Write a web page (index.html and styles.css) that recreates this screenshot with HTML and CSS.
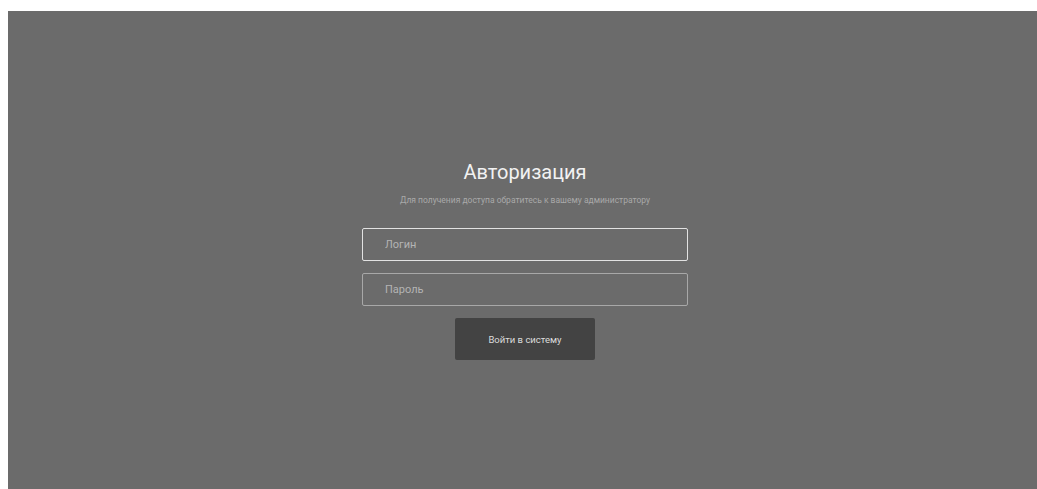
FILE: index.html
```html
<!DOCTYPE html>
<html lang="ru">
<head>
<meta charset="utf-8">
<title>Авторизация</title>
<link rel="stylesheet" href="styles.css">
</head>
<body>
<main class="screen">
  <form class="auth">
    <h1 class="auth-title">Авторизация</h1>
    <p class="auth-hint">Для получения доступа обратитесь к вашему администратору</p>
    <input class="auth-field auth-field--active" type="text" placeholder="Логин">
    <input class="auth-field" type="password" placeholder="Пароль">
    <button class="auth-submit" type="button">Войти в систему</button>
  </form>
</main>
</body>
</html>
```

FILE: styles.css
```css
html {
  overflow: hidden;
}

body {
  margin: 11px 0 0 8px;
  background: #ffffff;
  font-family: Roboto, "Liberation Sans", sans-serif;
}

.screen {
  width: 1034px;
  height: 478px;
  background: #6b6b6b;
  box-sizing: border-box;
  padding-top: 149px;
}

.auth {
  width: 326px;
  margin: 0 auto;
  display: flex;
  flex-direction: column;
  align-items: center;
}

.auth-title {
  margin: 0;
  font-size: 20px;
  line-height: 24px;
  font-weight: 400;
  color: #f2f2f2;
}

.auth-hint {
  margin: 10px 0 0;
  font-size: 8.5px;
  line-height: 12px;
  color: #a9a9a9;
  white-space: nowrap;
}

.auth-field {
  width: 100%;
  height: 33px;
  box-sizing: border-box;
  margin-top: 22px;
  padding: 0 22px;
  background: transparent;
  border: 1px solid #a8a8a8;
  border-radius: 2px;
  font-family: inherit;
  font-size: 11px;
  color: #e0e0e0;
  outline: none;
}

.auth-field + .auth-field {
  margin-top: 12px;
}

.auth-field--active {
  border-color: #e2e2e2;
}

.auth-field::placeholder {
  color: #b4b4b4;
}

.auth-submit {
  margin-top: 12px;
  width: 140px;
  height: 42px;
  background: #434343;
  border: none;
  border-radius: 2px;
  font-family: inherit;
  font-size: 9.5px;
  color: #dcdcdc;
}
```
